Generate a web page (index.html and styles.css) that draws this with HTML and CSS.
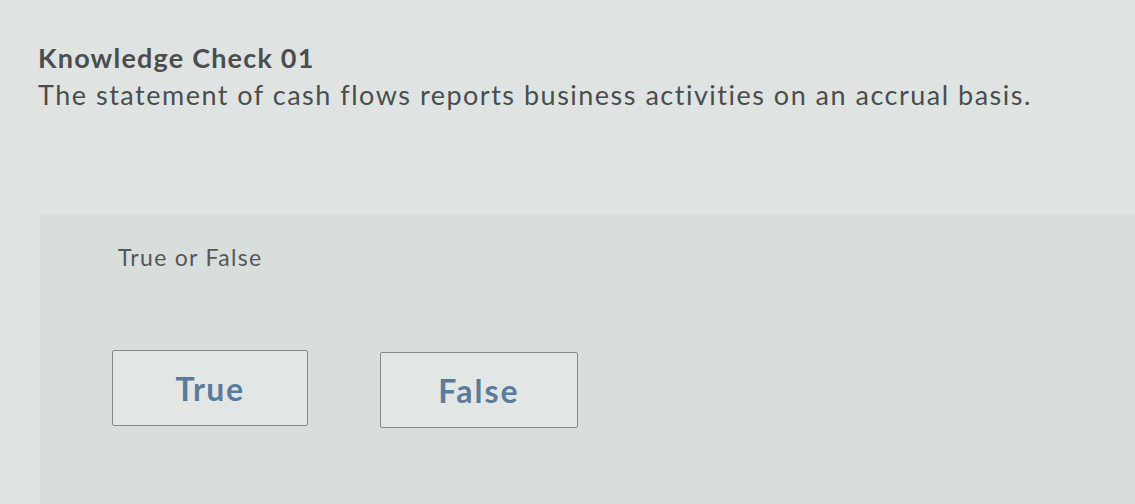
FILE: index.html
```html
<!DOCTYPE html>
<html lang="en">
  <head>
    <meta charset="UTF-8" />
    <meta name="viewport" content="width=device-width, initial-scale=1.0" />
    <title>Knowledge Check 01</title>
    <link rel="stylesheet" href="styles.css">
  </head>
  <body>
    <div class="question">
      <h1 class="question-title">Knowledge Check 01</h1>
      <p class="question-text">The statement of cash flows reports business activities on an accrual basis.</p>
    </div>
    <div class="answer-panel">
      <p class="answer-type">True or False</p>
      <div class="choices">
        <button class="choice">True</button>
        <button class="choice choice-false">False</button>
      </div>
    </div>
  </body>
</html>
```

FILE: styles.css
```css
body {
  font-family: Lato, "Open Sans", sans-serif;
  background-color: #dfe4e2;
  color: #4a4e4f;
  margin: 0;
  padding: 0;
  height: 504px;
  overflow: hidden;
}
.question {
  padding: 43px 0 0 38px;
  height: 215px;
  box-sizing: border-box;
}
.question-title {
  font-size: 27px;
  font-weight: 700;
  margin: 0;
  line-height: 30px;
  letter-spacing: 1.2px;
}
.question-text {
  font-size: 27px;
  margin: 7px 0 0;
  line-height: 30px;
  letter-spacing: 1.5px;
}
.answer-panel {
  margin-left: 40px;
  height: 289px;
  background-color: #d8dedc;
  padding: 28px 0 0 78px;
  box-sizing: border-box;
}
.answer-type {
  font-size: 23px;
  margin: 0;
  line-height: 28px;
  letter-spacing: 1.3px;
  color: #54585a;
}
.choices {
  display: flex;
  gap: 72px;
  margin: 79px 0 0 -6px;
}
.choice {
  width: 196px;
  height: 76px;
  background: #e2e7e5;
  border: 1.5px solid #858a8b;
  border-radius: 2px;
  font-family: inherit;
  font-size: 32px;
  font-weight: 700;
  letter-spacing: 1.5px;
  color: #5a7c9c;
  cursor: pointer;
}
.choice-false {
  width: 198px;
  margin-top: 2px;
  letter-spacing: 2px;
}
```
